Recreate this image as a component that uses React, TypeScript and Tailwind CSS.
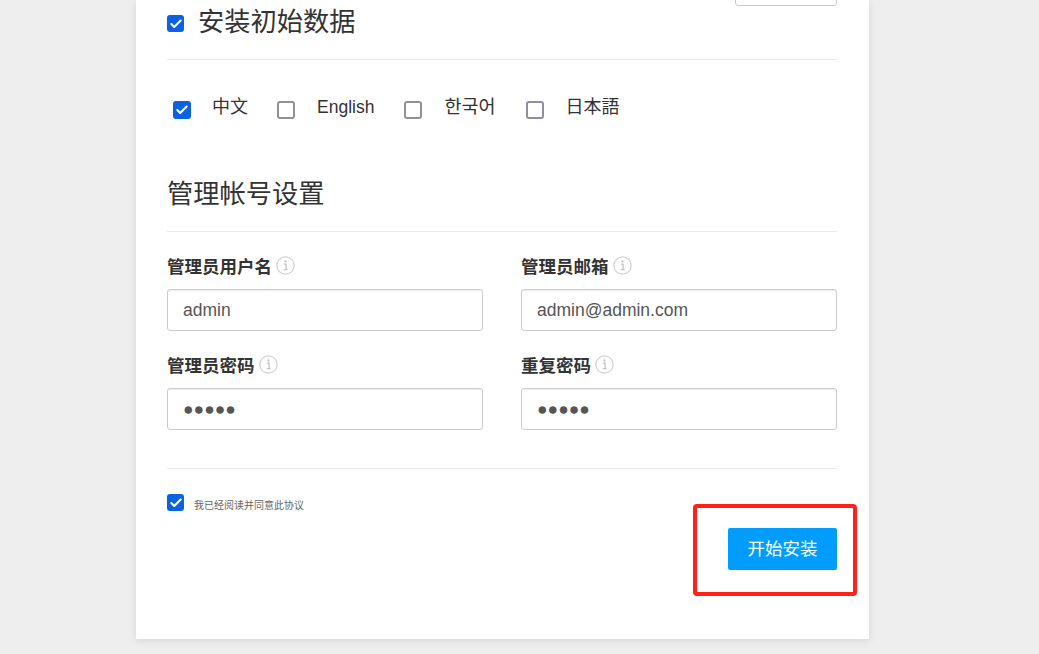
import { Check } from 'lucide-react';

const FONT = '"Liberation Sans", "Noto Sans CJK SC", sans-serif';

function Box({ checked, size }: { checked: boolean; size: string }) {
  return (
    <span
      className={`${size} shrink-0 rounded-[3px] flex items-center justify-center ${
        checked ? 'bg-[#0a62e0]' : 'border-2 border-[#8f8f9d] bg-white'
      }`}
    >
      {checked && <Check className="w-[14px] h-[14px] text-white" strokeWidth={3.6} />}
    </span>
  );
}

function InfoIcon() {
  return (
    <svg width="19" height="19" viewBox="0 0 18 18" className="shrink-0 -mt-[3px]" fill="none">
      <circle cx="9" cy="9" r="8.2" stroke="#d2d2d2" strokeWidth="1.2" />
      <circle cx="9" cy="5.2" r="1.1" fill="#c4c4c4" />
      <path d="M7.4 7.8H9.6V12.8M7.3 13H11" stroke="#c4c4c4" strokeWidth="1.2" />
    </svg>
  );
}

function Field({ label, value }: { label: string; value: string }) {
  return (
    <div className="w-[316px]">
      <div className="h-[22px] flex items-center gap-[4px]">
        <span className="text-[17.5px] leading-[22px] font-bold text-[#333]">{label}</span>
        <InfoIcon />
      </div>
      <input
        readOnly
        value={value}
        className="mt-[11px] block w-full h-[42px] px-[15px] border border-[#ccc] rounded-[3px] text-[17.5px] text-[#555] bg-white shadow-[inset_0_1px_1px_rgba(0,0,0,0.075)] outline-none"
        style={{ fontFamily: FONT }}
      />
    </div>
  );
}

const LANGS = [
  { name: '中文', checked: true, gap: 'mr-[29px]', font: 'ml-[21px] text-[18px]' },
  { name: 'English', checked: false, gap: 'mr-[30px]', font: 'ml-[22px] text-[17.5px]' },
  { name: '한국어', checked: false, gap: 'mr-[31px]', font: 'ml-[22px] text-[18.5px] font-["Liberation_Sans","Noto_Sans_CJK_KR",sans-serif]' },
  { name: '日本語', checked: false, gap: '', font: 'ml-[21px] text-[18px] font-["Liberation_Sans","Noto_Sans_CJK_JP",sans-serif]' },
];

export default function App() {
  return (
    <div
      className="w-[1039px] h-[654px] overflow-hidden bg-[#eeeeee]"
      style={{ fontFamily: FONT }}
    >
      <div className="relative ml-[136px] w-[733px] h-[639px] bg-white shadow-[0_2px_8px_rgba(0,0,0,0.1)] pl-[31px] pr-[32px]">
        {/* Cut off by the scroll position, only its bottom edge shows */}
        <div className="absolute top-[-30px] right-[32px] w-[102px] h-[36px] border border-[#ccc] rounded-[3px] bg-white" />

        <div className="h-[60px] border-b border-[#eaeaea] pt-[15px] flex items-start gap-[15px]">
          <Box checked size="w-[17px] h-[17px]" />
          <span className="text-[26.25px] leading-[12px] -ml-[1px] pt-[1px] text-[#333]">安装初始数据</span>
        </div>

        <div className="mt-[35px] ml-[6px] h-[30px] flex items-start">
          {LANGS.map((l) => (
            <label key={l.name} className={`flex items-start ${l.gap}`}>
              <span className="mt-[6px]">
                <Box checked={l.checked} size="w-[18px] h-[18px]" />
              </span>
              <span className={`leading-[24px] text-[#333] ${l.font}`}>{l.name}</span>
            </label>
          ))}
        </div>

        <h2 className="mt-[51px] text-[26.25px] leading-[36px] font-normal text-[#333]">管理帐号设置</h2>
        <div className="mt-[19px] border-t border-[#eaeaea]" />

        <div className="mt-[24px] grid grid-cols-[316px_316px] gap-x-[38px] gap-y-[24px]">
          <Field label="管理员用户名" value="admin" />
          <Field label="管理员邮箱" value="admin@admin.com" />
          <Field label="管理员密码" value="●●●●●" />
          <Field label="重复密码" value="●●●●●" />
        </div>

        <div className="mt-[38px] border-t border-[#eaeaea]" />

        <div className="mt-[25px] flex items-start gap-[10px]">
          <Box checked size="w-[17px] h-[17px]" />
          <span className="mt-[5px] text-[10px] leading-[14px] text-[#666]">我已经阅读并同意此协议</span>
        </div>

        <div className="mt-[15px] flex justify-end">
          <button className="w-[109px] h-[42px] bg-[#009dff] rounded-[2px] text-white text-[17.5px]">开始安装</button>
        </div>

        {/* Red annotation drawn over the page */}
        <div className="absolute left-[557px] top-[504px] w-[164px] h-[92px] border-[4px] border-[#ff2116] rounded-[4px]" />
      </div>
    </div>
  );
}
